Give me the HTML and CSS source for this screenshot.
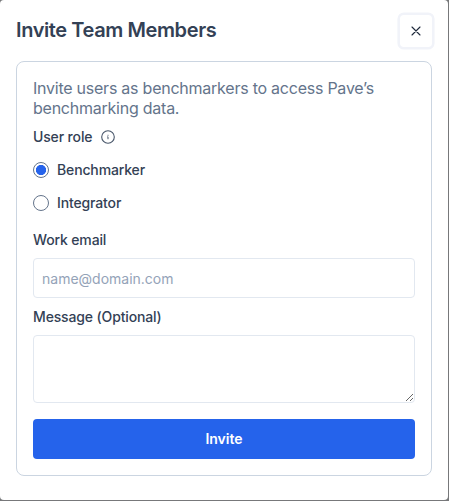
FILE: index.html
```html
<!DOCTYPE html>
<html lang="en">
<head>
    <meta charset="UTF-8">
    <meta name="viewport" content="width=device-width, initial-scale=1.0">
    <title>Invite Team Members</title>
    <link rel="stylesheet" href="styles.css">
</head>
<body>

    <div class="dialog">
        <div class="dialog-header">
            <h1>Invite Team Members</h1>
            <button class="close" type="button" aria-label="Close">
                <svg width="10" height="10" viewBox="0 0 10 10" fill="none" stroke="#1e293b" stroke-width="1.1" stroke-linecap="round">
                    <path d="M1 1L9 9M9 1L1 9"/>
                </svg>
            </button>
        </div>

        <form class="card">
            <p class="intro">Invite users as benchmarkers to access Pave’s benchmarking data.</p>

            <div class="label role-label">
                <span>User role</span>
                <svg width="14" height="14" viewBox="0 0 14 14" fill="none" stroke="#475569">
                    <circle cx="7" cy="7" r="6.3" stroke-width="1.1"/>
                    <path d="M7 6.8V9.2M6.4 6.8H7M7 4.8V5.7" stroke-width="1"/>
                </svg>
            </div>

            <div class="roles">
                <label class="radio"><input type="radio" name="role" checked>Benchmarker</label>
                <label class="radio"><input type="radio" name="role">Integrator</label>
            </div>

            <label class="label" for="email">Work email</label>
            <input class="field" id="email" type="email" placeholder="name@domain.com">

            <label class="label" for="message">Message (Optional)</label>
            <textarea class="field message" id="message"></textarea>

            <button class="submit" type="button">Invite</button>
        </form>
    </div>

</body>
</html>
```
FILE: styles.css
```css
* {
    box-sizing: border-box;
}

body {
    margin: 0;
    background-color: #77787a;
    font-family: Inter, "Liberation Sans", sans-serif;
    color: #334155;
    overflow: hidden;
}

.dialog {
    width: 448px;
    height: 500px;
    padding: 15px 16px 24px;
    background-color: #fff;
    border-radius: 4px;
}

.dialog-header {
    display: flex;
    justify-content: space-between;
    height: 46px;
}

h1 {
    margin: 0;
    font-size: 20px;
    line-height: 30px;
    font-weight: 600;
    letter-spacing: -0.4px;
}

.close {
    display: flex;
    align-items: center;
    justify-content: center;
    width: 32px;
    height: 32px;
    padding: 0;
    border: none;
    border-radius: 4px;
    background-color: #fff;
    box-shadow: 0 0 0 2.6px #f1f3f9;
}

.card {
    display: flex;
    flex-direction: column;
    height: 415px;
    padding: 16px;
    border: 1px solid #cbd5e1;
    border-radius: 8px;
}

.intro {
    margin: 0 0 9px;
    font-size: 16px;
    line-height: 20px;
    letter-spacing: -0.24px;
    color: #64748b;
}

.label {
    font-size: 14px;
    line-height: 20px;
    font-weight: 500;
    letter-spacing: -0.14px;
    margin-bottom: 8px;
}

.role-label {
    display: flex;
    align-items: center;
    gap: 9px;
    margin-bottom: 13px;
}

.roles {
    display: flex;
    flex-direction: column;
    gap: 13px;
    margin-bottom: 17px;
}

.radio {
    display: flex;
    align-items: center;
    gap: 8px;
    font-size: 14px;
    line-height: 20px;
    font-weight: 500;
    letter-spacing: -0.14px;
}

.radio input {
    appearance: none;
    width: 16px;
    height: 16px;
    margin: 0;
    border: 1px solid #64748b;
    border-radius: 50%;
}

.radio input:checked {
    background: radial-gradient(circle, #2563eb 4.8px, #fff 5.4px);
}

.field {
    width: 100%;
    height: 40px;
    margin: 0 0 9px;
    padding: 0 8px;
    border: 1px solid #e2e8f0;
    border-radius: 4px;
    background-color: #fff;
    font-family: inherit;
    font-size: 14px;
    color: #334155;
}

.field::placeholder {
    color: #94a3b8;
}

.message {
    height: 68px;
    margin-bottom: 16px;
    resize: vertical;
}

.submit {
    height: 40px;
    padding: 0 0 1px;
    border: none;
    border-radius: 4px;
    background-color: #2563eb;
    color: #fff;
    font-family: inherit;
    font-size: 14px;
    font-weight: 600;
}
```
